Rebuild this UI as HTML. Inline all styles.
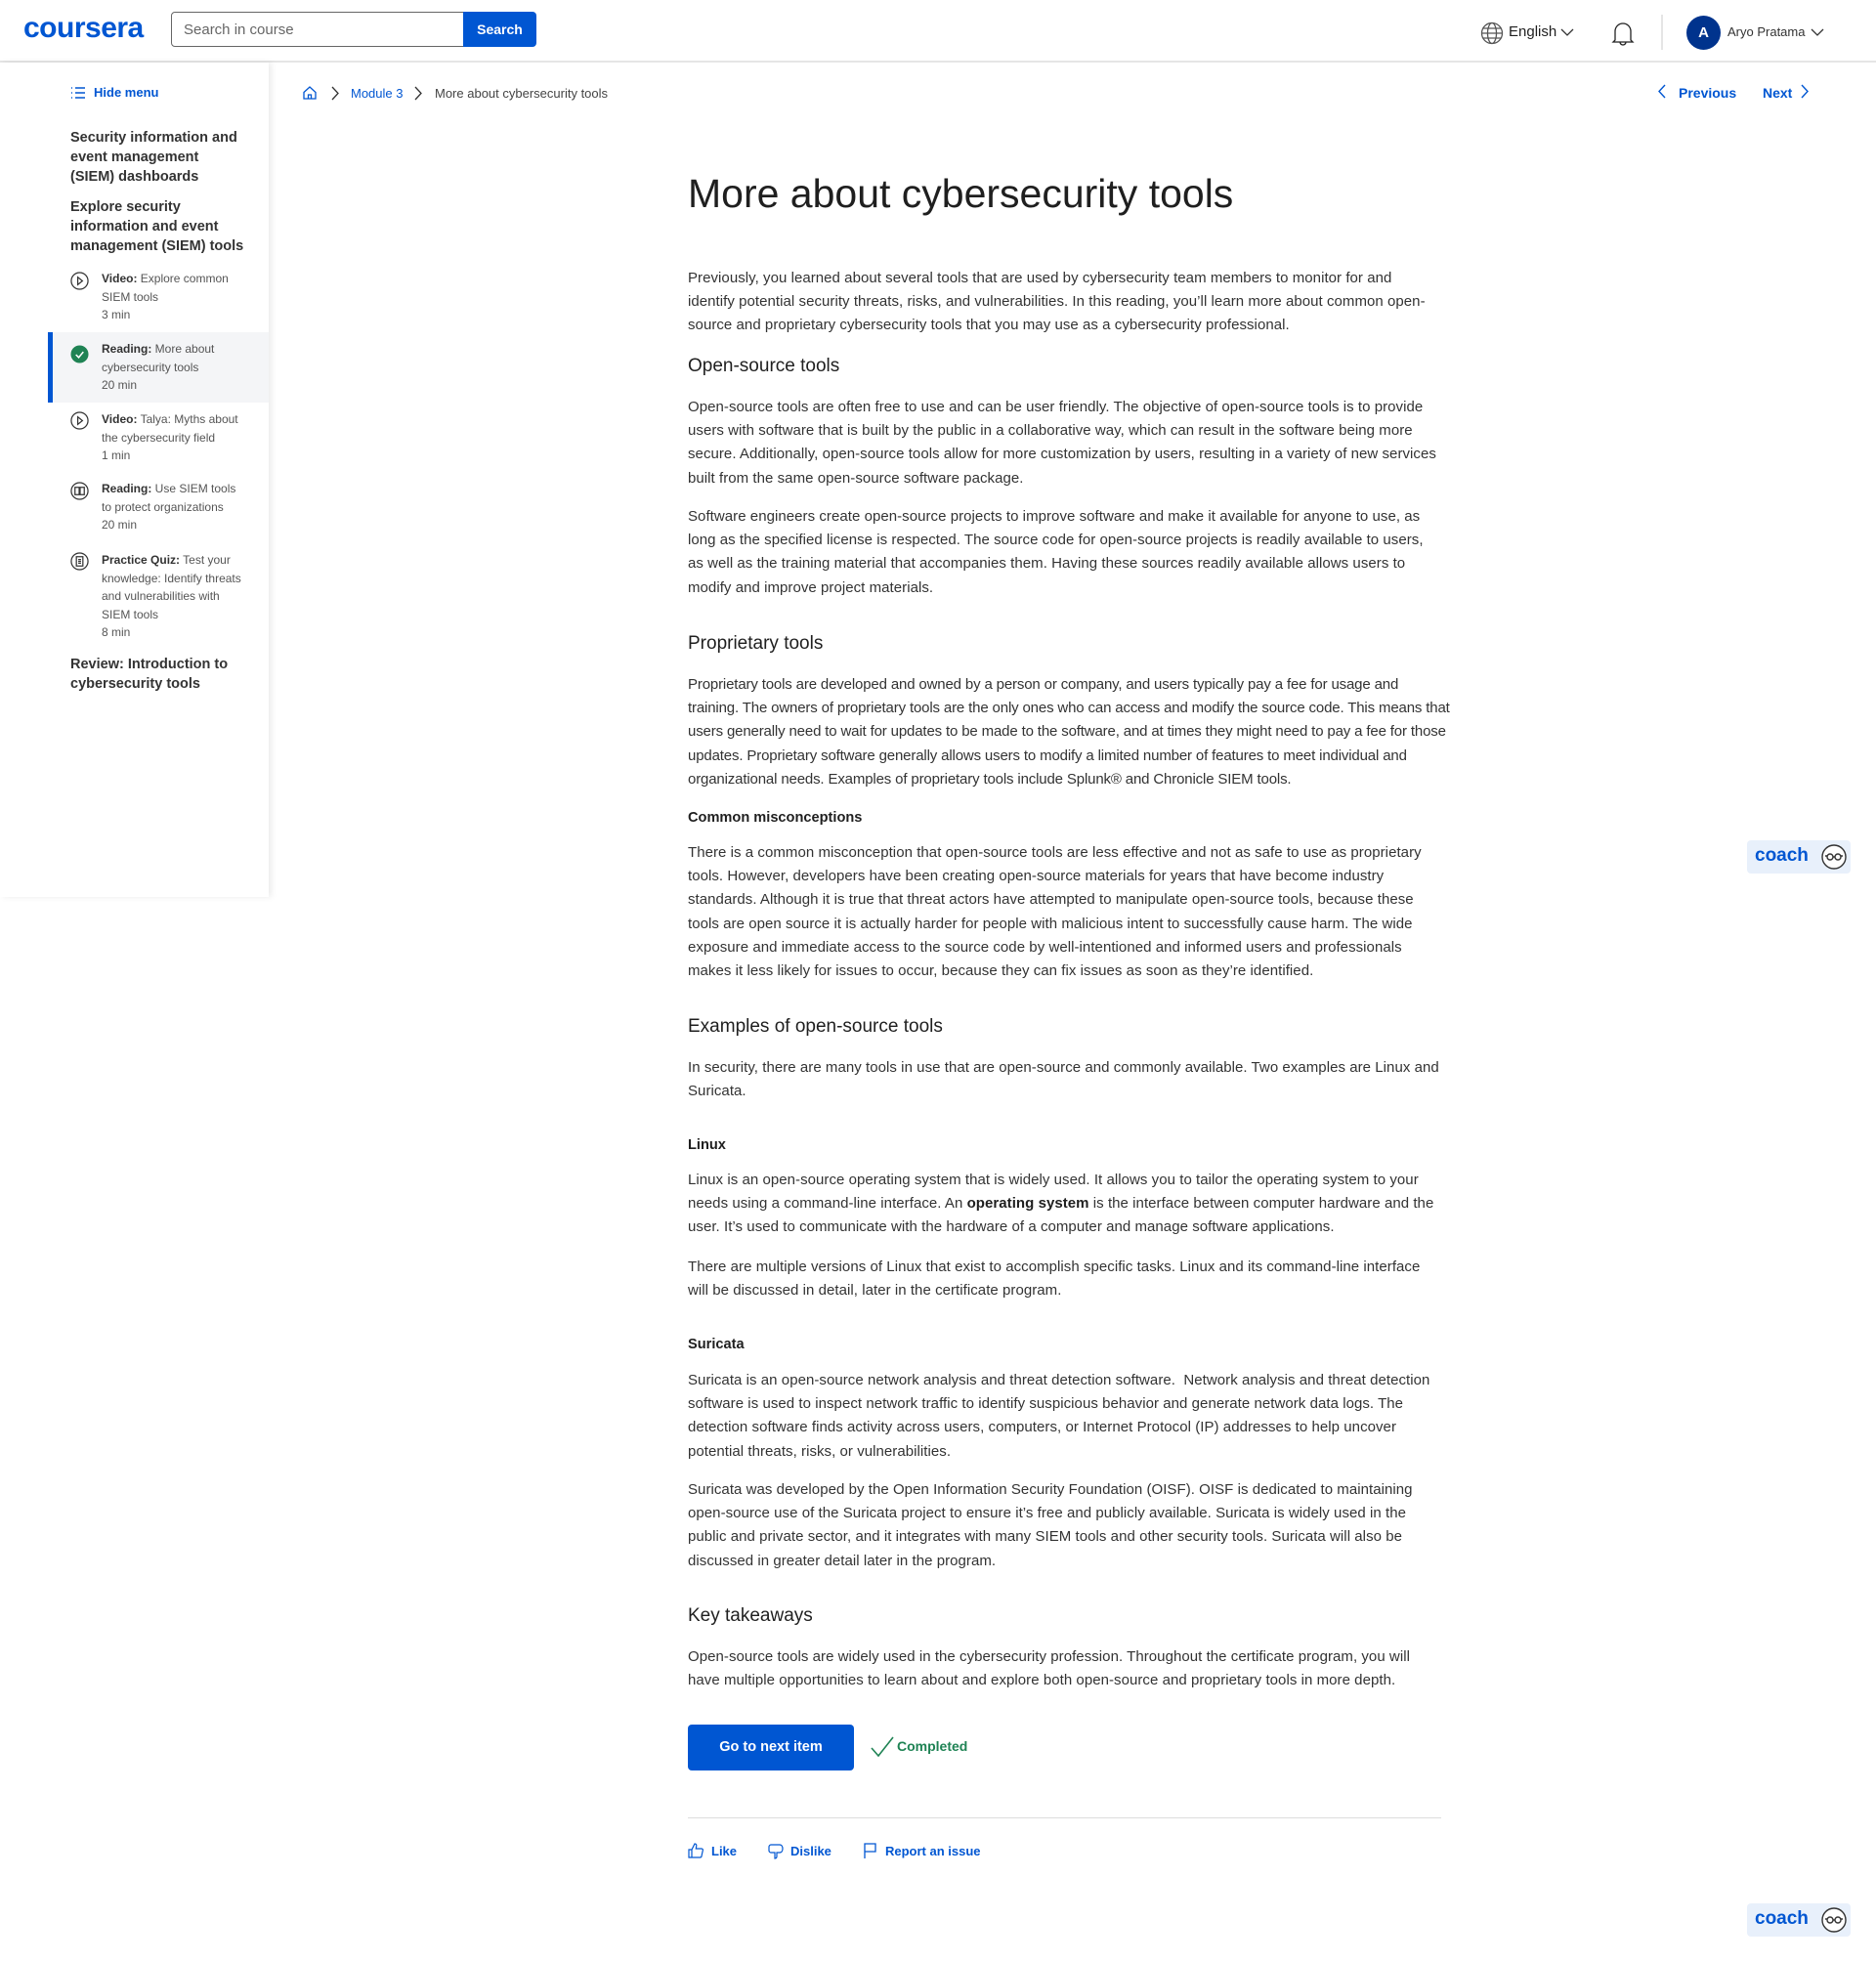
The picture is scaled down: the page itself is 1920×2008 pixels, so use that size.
<!DOCTYPE html>
<html><head><meta charset="utf-8">
<style>
*{margin:0;padding:0;box-sizing:border-box}
body{width:1920px;height:2008px;position:relative;background:#fff;font-family:"Liberation Sans",sans-serif;color:#1f1f1f;overflow:hidden}
.a{position:absolute}
.hdr{position:absolute;left:0;top:0;width:1920px;height:64px;border-bottom:2px solid #e5e5e5;background:#fff}
.p{position:absolute;left:704px;width:770px;font-size:15px;letter-spacing:0.05px;line-height:24.2px;color:#333}
.h2{position:absolute;left:704px;font-size:19px;color:#1f1f1f}
.h3{position:absolute;left:704px;font-size:14.6px;font-weight:bold;color:#1f1f1f}
.side{position:absolute;left:0;top:64px;width:275px;height:854px;background:#fff;box-shadow:3px 0 6px rgba(0,0,0,.08)}
.st{position:absolute;left:72px;width:172px;font-size:14.5px;line-height:20px;font-weight:bold;color:#333}
.it{position:absolute;left:104px;width:148px;font-size:12px;line-height:18.5px;color:#555}
.it b{color:#333}
.ic{position:absolute;left:72px;width:19px;height:19px}
.blue{color:#0056d2}
.coach{position:absolute;left:1788px;width:106px;height:34px;background:#e8f0fb;border-radius:4px}
.coach span{position:absolute;left:8px;top:5px;font-size:19px;font-weight:bold;color:#0056d2}
.coach svg{position:absolute;right:4px;top:4px}
</style></head><body>
<div class="hdr">
 <div class="a" style="left:24px;top:12px;font-size:30px;font-weight:bold;color:#0056d2;letter-spacing:-0.5px">coursera</div>
 <div class="a" style="left:175px;top:12px;width:300px;height:36px;border:1px solid #666;border-radius:4px 0 0 4px;font-size:15px;color:#666;padding:9px 12px">Search in course</div>
 <div class="a" style="left:474px;top:12px;width:75px;height:36px;background:#0056d2;border-radius:0 4px 4px 0;color:#fff;font-size:14px;font-weight:bold;text-align:center;line-height:36px">Search</div>
 <svg class="a" style="left:1515px;top:22px" width="24" height="24" viewBox="0 0 24 24" fill="none" stroke="#555" stroke-width="1.3"><circle cx="12" cy="12" r="10.5"/><ellipse cx="12" cy="12" rx="4.5" ry="10.5"/><path d="M1.5 12h21M3 7h18M3 17h18"/></svg>
 <div class="a" style="left:1544px;top:24px;font-size:15px;color:#1f1f1f">English</div>
 <svg class="a" style="left:1597px;top:29px" width="14" height="9" viewBox="0 0 14 9" fill="none" stroke="#333" stroke-width="1.3"><path d="M1 1l6 6 6-6"/></svg>
 <svg class="a" style="left:1649px;top:21px" width="24" height="26" viewBox="0 0 24 26" fill="none" stroke="#222" stroke-width="1.3"><path d="M4 20V11a8 8 0 0 1 16 0v9l2 2H2z"/><path d="M9 22a3 3 0 0 0 6 0"/></svg>
 <div class="a" style="left:1700px;top:15px;width:2px;height:36px;background:#e5e5e5"></div>
 <div class="a" style="left:1726px;top:16px;width:35px;height:35px;border-radius:50%;background:#00338d;color:#fff;font-weight:bold;font-size:15px;text-align:center;line-height:35px">A</div>
 <div class="a" style="left:1768px;top:25px;font-size:13px;color:#333">Aryo Pratama</div>
 <svg class="a" style="left:1853px;top:29px" width="14" height="9" viewBox="0 0 14 9" fill="none" stroke="#333" stroke-width="1.3"><path d="M1 1l6 6 6-6"/></svg>
</div>

<div class="side">
 <svg class="a" style="left:72px;top:24px" width="16" height="14" viewBox="0 0 16 14" fill="none" stroke="#0056d2" stroke-width="1.4"><path d="M1 2h1M5 2h10M1 7h1M5 7h10M1 12h1M5 12h10"/></svg>
 <div class="a blue" style="left:96px;top:23px;font-size:13px;font-weight:bold">Hide menu</div>
</div>
<div class="st" style="top:131px">Security information and event management (SIEM) dashboards</div>
<div class="st" style="top:202px;width:185px">Explore security information and event management (SIEM) tools</div>

<svg class="ic" style="top:278px" viewBox="0 0 20 20" fill="none" stroke="#333" stroke-width="1.3"><circle cx="10" cy="10" r="9"/><path d="M8 6v8l5-4z"/></svg>
<div class="it" style="top:276px"><b>Video:</b> Explore common SIEM tools<br>3 min</div>

<div class="a" style="left:49px;top:340px;width:226px;height:72px;background:#f4f5f7"></div>
<div class="a" style="left:49px;top:340px;width:5px;height:72px;background:#0056d2"></div>
<svg class="ic" style="top:353px" viewBox="0 0 20 20"><circle cx="10" cy="10" r="9.5" fill="#1f8354"/><path d="M6 10.5l3 3 5-6" fill="none" stroke="#fff" stroke-width="1.6"/></svg>
<div class="it" style="top:348px"><b>Reading:</b> More about cybersecurity tools<br>20 min</div>

<svg class="ic" style="top:421px" viewBox="0 0 20 20" fill="none" stroke="#333" stroke-width="1.3"><circle cx="10" cy="10" r="9"/><path d="M8 6v8l5-4z"/></svg>
<div class="it" style="top:420px"><b>Video:</b> Talya: Myths about the cybersecurity field<br>1 min</div>

<svg class="ic" style="top:493px" viewBox="0 0 20 20" fill="none" stroke="#333" stroke-width="1.3"><circle cx="10" cy="10" r="9"/><path d="M5 6h4.5v8H5zM10.5 6H15v8h-4.5z"/></svg>
<div class="it" style="top:491px"><b>Reading:</b> Use SIEM tools to protect organizations<br>20 min</div>

<svg class="ic" style="top:565px" viewBox="0 0 20 20" fill="none" stroke="#333" stroke-width="1.3"><circle cx="10" cy="10" r="9"/><rect x="6.5" y="5" width="7" height="10"/><path d="M8.5 8h3M8.5 10h3M8.5 12h3"/></svg>
<div class="it" style="top:564px"><b>Practice Quiz:</b> Test your knowledge: Identify threats and vulnerabilities with SIEM tools<br>8 min</div>

<div class="st" style="top:670px;width:185px">Review: Introduction to cybersecurity tools</div>

<svg class="a" style="left:309px;top:87px" width="16" height="16" viewBox="0 0 16 16" fill="none" stroke="#0056d2" stroke-width="1.3"><path d="M2 7.5L8 2l6 5.5V14H2z"/><path d="M6.5 14V10h3v4"/></svg>
<svg class="a" style="left:339px;top:88px" width="9" height="15" viewBox="0 0 9 15" fill="none" stroke="#333" stroke-width="1.3"><path d="M1 1l6 6.5L1 14"/></svg>
<div class="a blue" style="left:359px;top:88px;font-size:13px">Module 3</div>
<svg class="a" style="left:424px;top:88px" width="9" height="15" viewBox="0 0 9 15" fill="none" stroke="#333" stroke-width="1.3"><path d="M1 1l6 6.5L1 14"/></svg>
<div class="a" style="left:445px;top:88px;font-size:13px;color:#444">More about cybersecurity tools</div>

<svg class="a" style="left:1696px;top:86px" width="9" height="15" viewBox="0 0 9 15" fill="none" stroke="#0056d2" stroke-width="1.4"><path d="M8 1L2 7.5 8 14"/></svg>
<div class="a blue" style="left:1718px;top:87px;font-size:14px;font-weight:bold">Previous</div>
<div class="a blue" style="left:1804px;top:87px;font-size:14px;font-weight:bold">Next</div>
<svg class="a" style="left:1843px;top:86px" width="9" height="15" viewBox="0 0 9 15" fill="none" stroke="#0056d2" stroke-width="1.4"><path d="M1 1l6 6.5L1 14"/></svg>

<div class="a" style="left:704px;top:175px;font-size:41px;color:#1f1f1f">More about cybersecurity tools</div>

<div class="p" style="top:273px">Previously, you learned about several tools that are used by cybersecurity team members to monitor for and identify potential security threats, risks, and vulnerabilities. In this reading, you’ll learn more about common open-source and proprietary cybersecurity tools that you may use as a cybersecurity professional.</div>
<div class="h2" style="top:364px">Open-source tools</div>
<div class="p" style="top:405px">Open-source tools are often free to use and can be user friendly. The objective of open-source tools is to provide users with software that is built by the public in a collaborative way, which can result in the software being more secure. Additionally, open-source tools allow for more customization by users, resulting in a variety of new services built from the same open-source software package.</div>
<div class="p" style="top:517px">Software engineers create open-source projects to improve software and make it available for anyone to use, as long as the specified license is respected. The source code for open-source projects is readily available to users, as well as the training material that accompanies them. Having these sources readily available allows users to modify and improve project materials.</div>
<div class="h2" style="top:648px">Proprietary tools</div>
<div class="p" style="top:689px;width:780px;letter-spacing:-0.15px">Proprietary tools are developed and owned by a person or company, and users typically pay a fee for usage and training. The owners of proprietary tools are the only ones who can access and modify the source code. This means that users generally need to wait for updates to be made to the software, and at times they might need to pay a fee for those updates. Proprietary software generally allows users to modify a limited number of features to meet individual and organizational needs. Examples of proprietary tools include Splunk® and Chronicle SIEM tools.</div>
<div class="h3" style="top:829px">Common misconceptions</div>
<div class="p" style="top:861px">There is a common misconception that open-source tools are less effective and not as safe to use as proprietary tools. However, developers have been creating open-source materials for years that have become industry standards. Although it is true that threat actors have attempted to manipulate open-source tools, because these tools are open source it is actually harder for people with malicious intent to successfully cause harm. The wide exposure and immediate access to the source code by well-intentioned and informed users and professionals makes it less likely for issues to occur, because they can fix issues as soon as they’re identified.</div>
<div class="h2" style="top:1040px">Examples of open-source tools</div>
<div class="p" style="top:1081px">In security, there are many tools in use that are open-source and commonly available. Two examples are Linux and Suricata.</div>
<div class="h3" style="top:1164px">Linux</div>
<div class="p" style="top:1196px">Linux is an open-source operating system that is widely used. It allows you to tailor the operating system to your needs using a command-line interface. An <b style="color:#1f1f1f">operating system</b> is the interface between computer hardware and the user. It’s used to communicate with the hardware of a computer and manage software applications.</div>
<div class="p" style="top:1285px">There are multiple versions of Linux that exist to accomplish specific tasks. Linux and its command-line interface will be discussed in detail, later in the certificate program.</div>
<div class="h3" style="top:1368px">Suricata</div>
<div class="p" style="top:1401px">Suricata is an open-source network analysis and threat detection software.&nbsp; Network analysis and threat detection software is used to inspect network traffic to identify suspicious behavior and generate network data logs. The detection software finds activity across users, computers, or Internet Protocol (IP) addresses to help uncover potential threats, risks, or vulnerabilities.</div>
<div class="p" style="top:1513px">Suricata was developed by the Open Information Security Foundation (OISF). OISF is dedicated to maintaining open-source use of the Suricata project to ensure it’s free and publicly available. Suricata is widely used in the public and private sector, and it integrates with many SIEM tools and other security tools. Suricata will also be discussed in greater detail later in the program.</div>
<div class="h2" style="top:1643px">Key takeaways</div>
<div class="p" style="top:1684px">Open-source tools are widely used in the cybersecurity profession. Throughout the certificate program, you will have multiple opportunities to learn about and explore both open-source and proprietary tools in more depth.</div>

<div class="a" style="left:704px;top:1765px;width:170px;height:47px;background:#0056d2;border-radius:4px;color:#fff;font-weight:bold;font-size:14.5px;text-align:center;line-height:47px">Go to next item</div>
<svg class="a" style="left:891px;top:1777px" width="24" height="22" viewBox="0 0 24 22" fill="none" stroke="#1f8354" stroke-width="1.6"><path d="M1 12l7 8L23 1"/></svg>
<div class="a" style="left:918px;top:1779px;font-size:14px;font-weight:bold;color:#1f8354">Completed</div>
<div class="a" style="left:704px;top:1860px;width:771px;height:1px;background:#ddd"></div>

<svg class="a" style="left:704px;top:1886px" width="16" height="16" viewBox="0 0 16 16" fill="none" stroke="#0056d2" stroke-width="1.2"><path d="M1 7h3v8H1zM4 7l3-6c1.5 0 2 1 1.7 2.5L8.3 6H14c1 0 1.5.8 1.3 1.8l-1.3 6c-.2.8-.8 1.2-1.6 1.2H4"/></svg>
<div class="a blue" style="left:728px;top:1887px;font-size:13px;font-weight:bold">Like</div>
<svg class="a" style="left:786px;top:1887px" width="16" height="16" viewBox="0 0 16 16" fill="none" stroke="#0056d2" stroke-width="1.2"><path d="M3 1h9c2 0 3 2 3 4s-1 4-3 4H9v4c0 1.5-1 2-2 2V9H3c-1 0-2-1-2-2V3c0-1 1-2 2-2z"/></svg>
<div class="a blue" style="left:809px;top:1887px;font-size:13px;font-weight:bold">Dislike</div>
<svg class="a" style="left:884px;top:1886px" width="14" height="16" viewBox="0 0 14 16" fill="none" stroke="#0056d2" stroke-width="1.3"><path d="M1 16V1h11v8H1"/></svg>
<div class="a blue" style="left:906px;top:1887px;font-size:13px;font-weight:bold">Report an issue</div>

<div class="coach" style="top:860px"><span>coach</span><svg width="26" height="26" viewBox="0 0 26 26" fill="#fff" stroke="#333" stroke-width="1.4"><circle cx="13" cy="13" r="12"/><circle cx="9" cy="13" r="3"/><circle cx="17" cy="13" r="3"/><path d="M12 13h2M4 12h2M20 12h2"/></svg></div>
<div class="coach" style="top:1948px"><span>coach</span><svg width="26" height="26" viewBox="0 0 26 26" fill="#fff" stroke="#333" stroke-width="1.4"><circle cx="13" cy="13" r="12"/><circle cx="9" cy="13" r="3"/><circle cx="17" cy="13" r="3"/><path d="M12 13h2M4 12h2M20 12h2"/></svg></div>
</body></html>
